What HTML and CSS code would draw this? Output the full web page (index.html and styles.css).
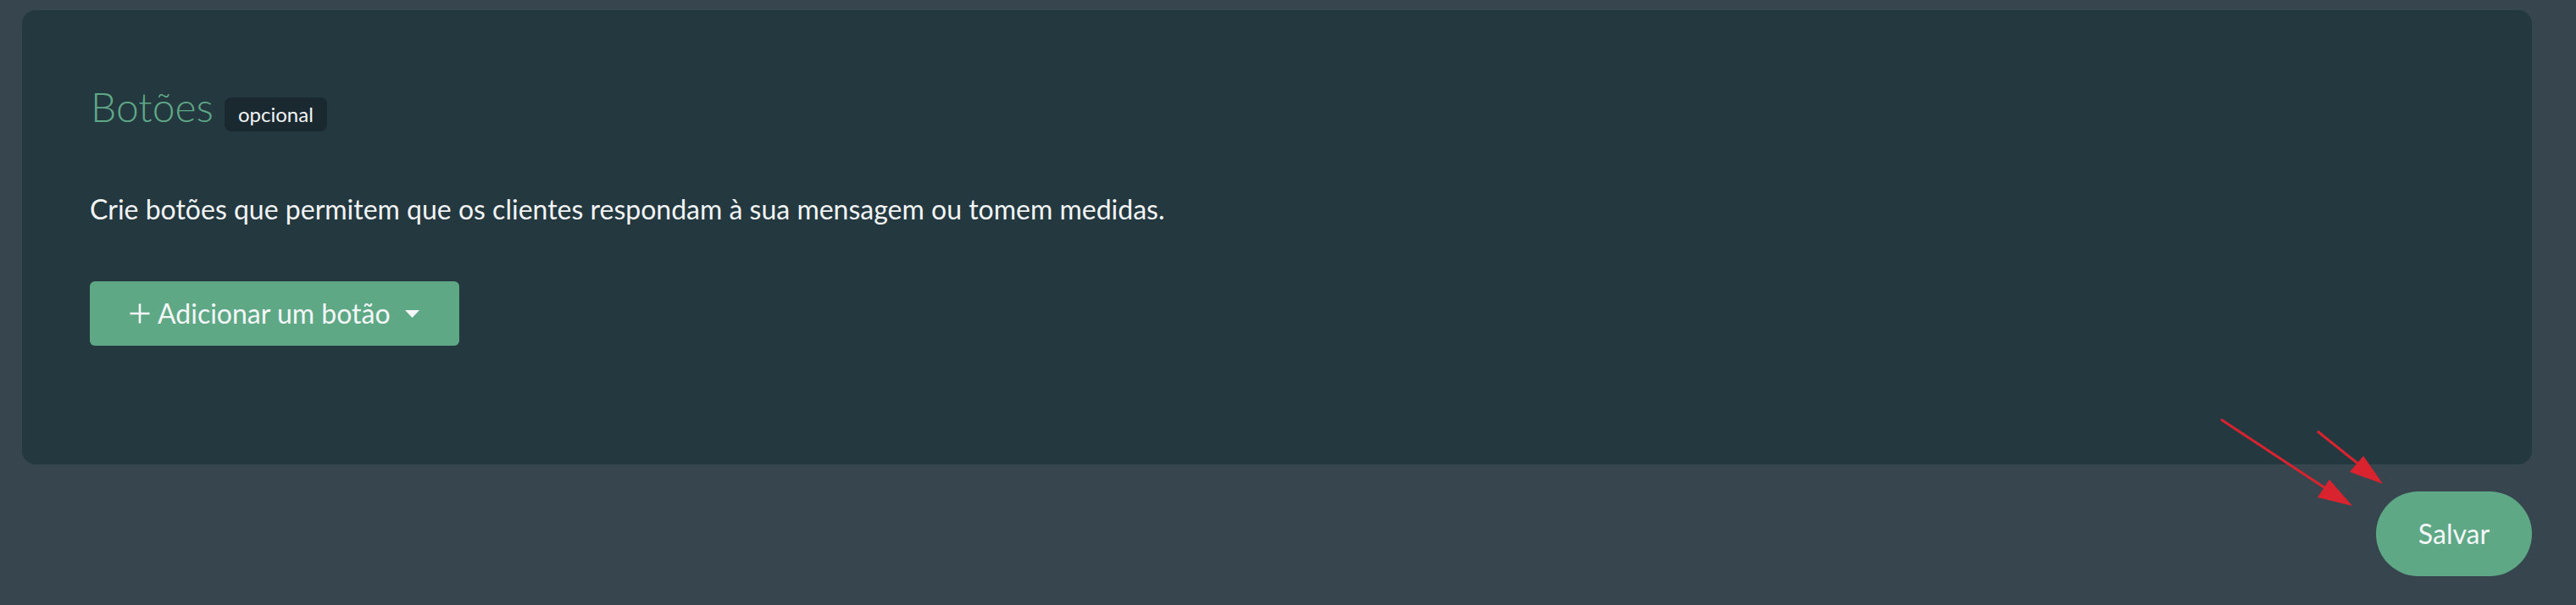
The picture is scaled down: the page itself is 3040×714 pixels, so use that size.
FILE: index.html
```html
<!DOCTYPE html>
<html lang="pt">
<head>
<meta charset="utf-8">
<title>Botões</title>
<link rel="stylesheet" href="styles.css">
</head>
<body>
<div class="page">
  <section class="card">
    <div class="title-row">
      <h2 class="title">Botões</h2>
      <span class="badge">opcional</span>
    </div>
    <p class="desc">Crie botões que permitem que os clientes respondam à sua mensagem ou tomem medidas.</p>
    <button class="add-btn" type="button">
      <svg class="plus" width="24" height="24" viewBox="0 0 24 24"><path d="M12 0.5v23M0.5 12h23" stroke="#f4f6f8" stroke-width="2.6" fill="none"/></svg>
      <span class="add-label">Adicionar um botão</span>
      <svg class="caret" width="17" height="9" viewBox="0 0 17 9"><path d="M0 0h17L8.5 9z" fill="#f4f6f8"/></svg>
    </button>
  </section>
  <div class="footer">
    <button class="save-btn" type="button">Salvar</button>
  </div>
  <svg class="arrows" width="3040" height="714" viewBox="0 0 3040 714">
    <g stroke="#d9232e" stroke-width="3" fill="none">
      <line x1="2621" y1="495" x2="2750" y2="580"/>
      <line x1="2735" y1="509" x2="2790" y2="553"/>
    </g>
    <g fill="#d9232e">
      <polygon points="2776,597 2749,566 2735,587"/>
      <polygon points="2812,571 2789,538 2773,557"/>
    </g>
  </svg>
</div>
</body>
</html>
```

FILE: styles.css
```css
html, body {
  margin: 0;
  padding: 0;
  background: #37464e;
}
body {
  font-family: Lato, "Open Sans", sans-serif;
  color: #f2f4f5;
}
.page {
  position: relative;
  width: 3040px;
  height: 714px;
  box-sizing: border-box;
  padding: 12px 52px 0 26px;
}
.card {
  background: #243840;
  border-radius: 16px;
  height: 536px;
  box-sizing: border-box;
  padding: 85px 80px 0 80px;
}
.title-row {
  display: flex;
  align-items: baseline;
  gap: 13px;
}
.title {
  margin: 0 0 0 1px;
  font-size: 48px;
  line-height: 58px;
  font-weight: 300;
  color: #5fa886;
}
.badge {
  display: inline-block;
  height: 40px;
  line-height: 40px;
  padding: 0 16px;
  font-size: 24px;
  border-radius: 8px;
  background: #1a2930;
  color: #f2f4f5;
}
.desc {
  margin: 73px 0 0 0;
  font-size: 32px;
  line-height: 38px;
  color: #f2f4f5;
}
.add-btn {
  margin-top: 66px;
  display: inline-flex;
  align-items: center;
  height: 76px;
  padding: 0 47px;
  border: 0;
  border-radius: 6px;
  background: #5ea886;
  color: #f4f6f8;
  font-family: inherit;
  font-size: 32px;
  line-height: 76px;
}
.plus {
  margin-right: 9px;
}
.caret {
  margin-left: 17px;
}
.footer {
  display: flex;
  justify-content: flex-end;
  margin-top: 32px;
}
.save-btn {
  width: 184px;
  height: 100px;
  border: 0;
  border-radius: 50px;
  background: #5ea886;
  color: #f4f6f8;
  font-family: inherit;
  font-size: 32px;
  line-height: 100px;
  padding: 0;
}
.arrows {
  position: absolute;
  left: 0;
  top: 0;
  pointer-events: none;
}
```
